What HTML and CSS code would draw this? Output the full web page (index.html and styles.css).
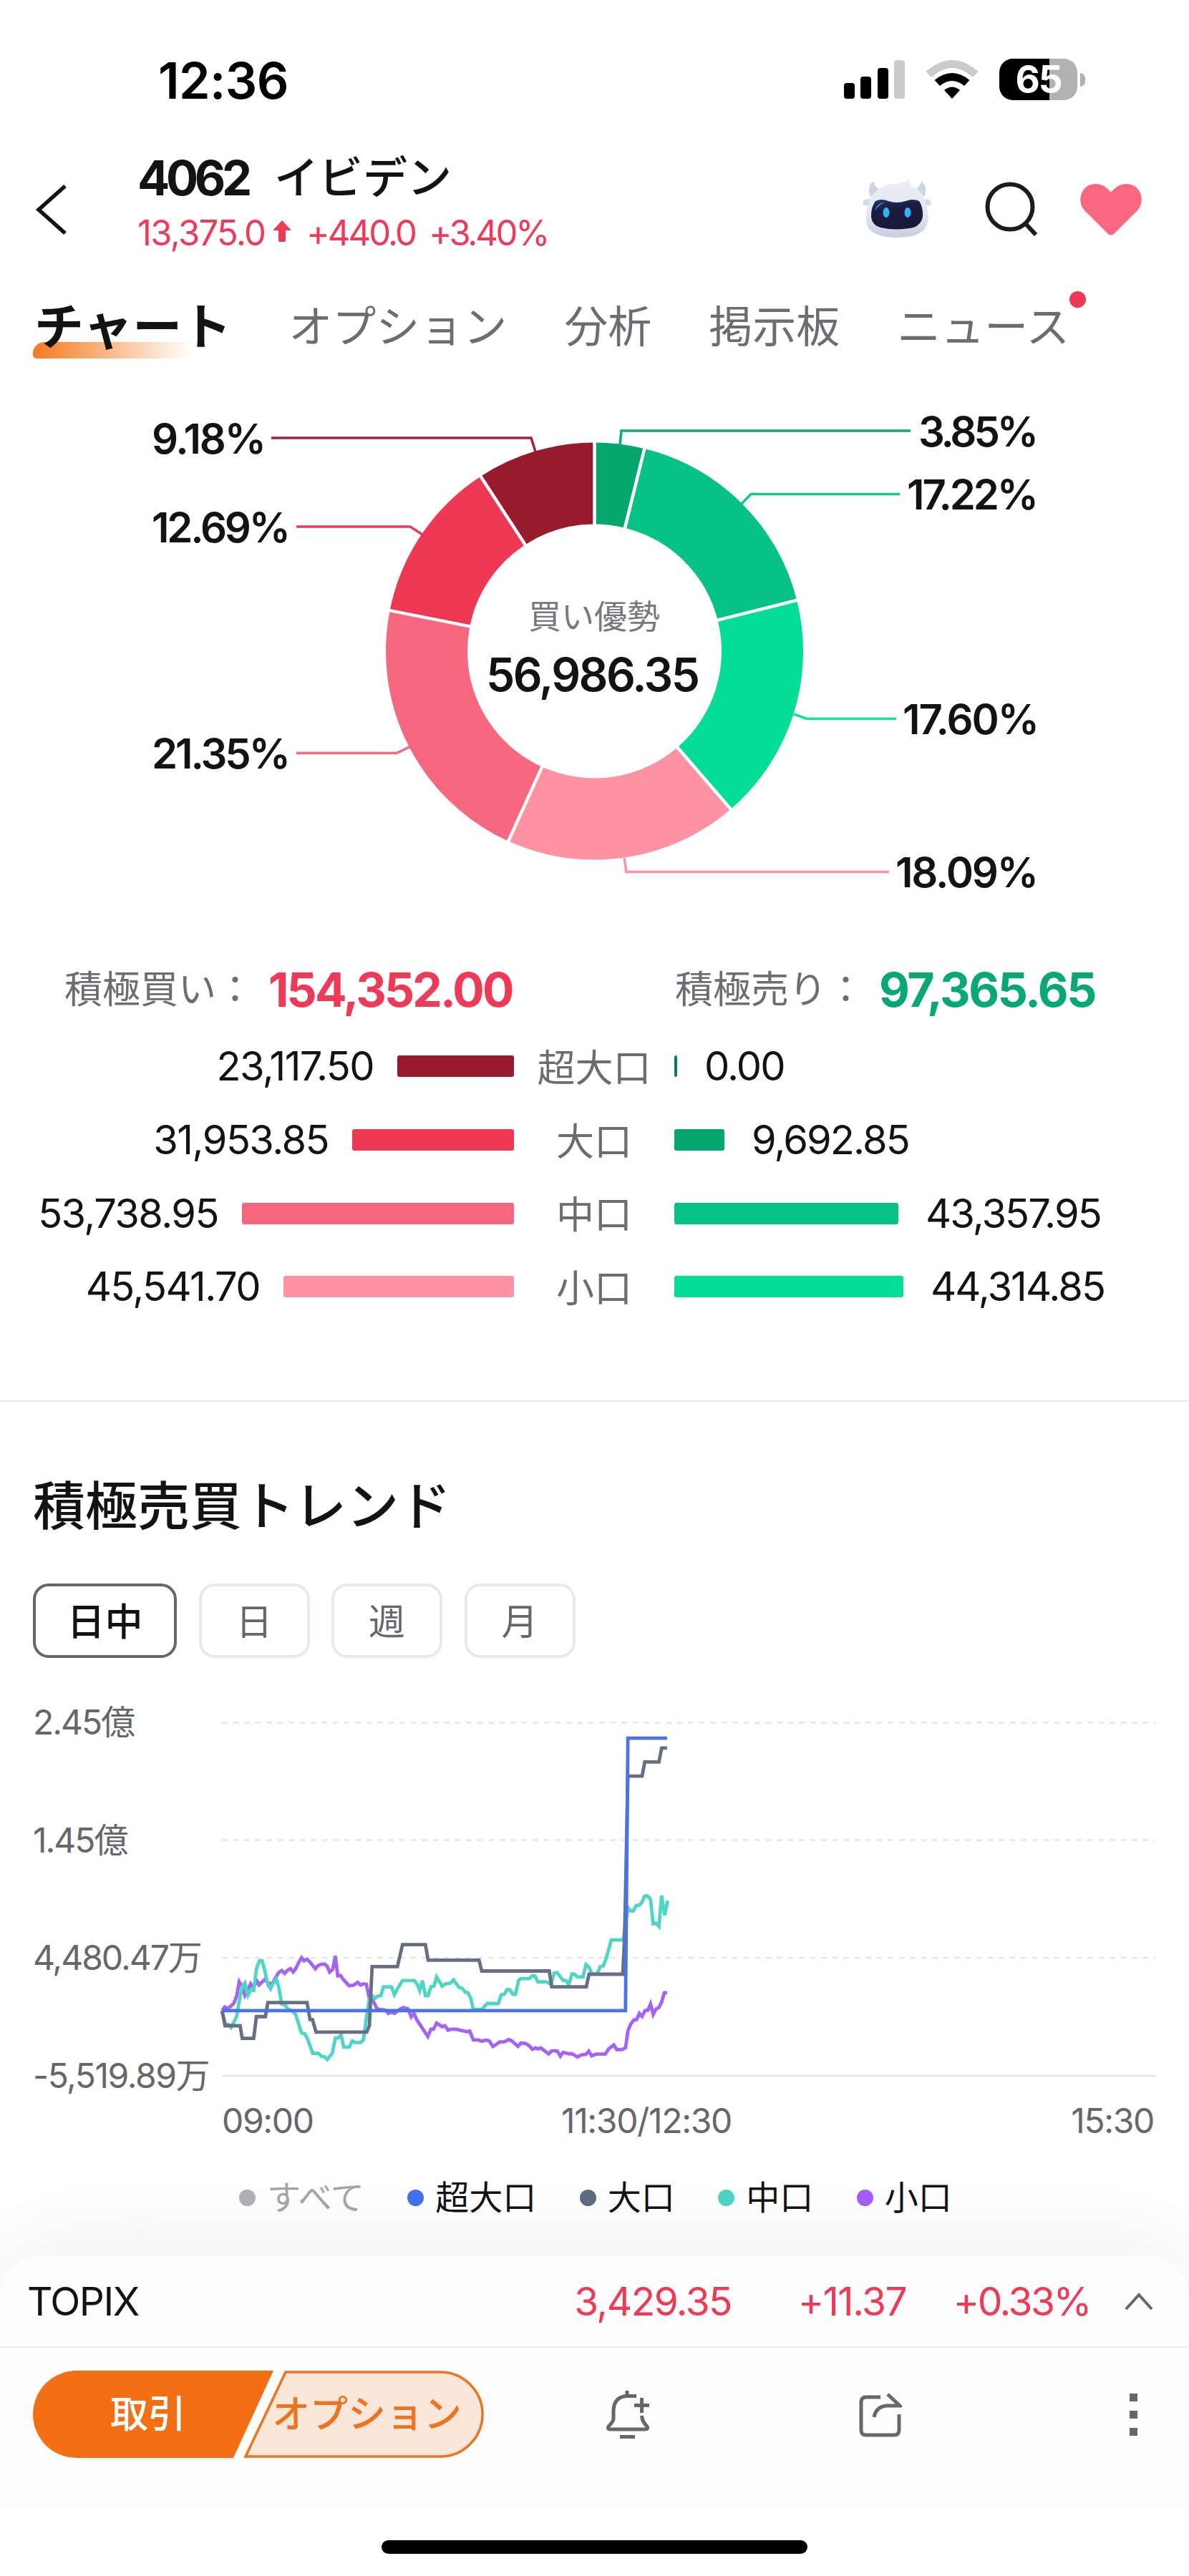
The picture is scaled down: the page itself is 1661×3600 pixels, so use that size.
FILE: index.html
```html
<!DOCTYPE html>
<html lang="ja">

<head>
  <meta charset="UTF-8">
  <meta name="viewport" content="width=device-width, initial-scale=1.0">
  <title>4062 イビデン</title>
  <link rel="stylesheet" href="styles.css">
</head>

<body>
  <!-- ステータスバー -->
  <div class="status-bar">
    <span class="time num">12:36</span>
    <div class="status-icons">
      <svg width="86" height="56" viewBox="0 0 86 56">
        <rect x="0" y="33" width="15" height="22" rx="4" />
        <rect x="23" y="24" width="15" height="31" rx="4" />
        <rect x="47" y="12" width="15" height="43" rx="4" />
        <rect x="70" y="1" width="15" height="54" rx="4" fill="#cbcbcb" />
      </svg>
      <svg class="wifi" width="74" height="56" viewBox="0 0 74 56">
        <path d="M0.500 17Q37 -15 73.500 17L66 25Q37 -1 8 25Z" fill="#cbcbcb" />
        <path d="M12.500 29Q37 9 61.500 29L54 37Q37 23 20 37Z" />
        <path d="M26 43Q37 34 48 43L37 55Z" />
      </svg>
      <div class="battery"><span class="num">65</span></div>
      <div class="battery-tip"></div>
    </div>
  </div>

  <!-- ヘッダー -->
  <header class="header">
    <svg class="back" width="48" height="76" viewBox="0 0 48 76">
      <path d="M43 5L6 38L43 71" fill="none" stroke="#131315" stroke-width="5.500" />
    </svg>
    <div class="stock">
      <div class="stock-name"><span class="code num">4062</span><span class="name">イビデン</span></div>
      <div class="stock-price num">
        <span class="price">13,375.0</span>
        <svg width="26" height="30" viewBox="0 0 26 30">
          <path d="M13 0L26 14H18V28Q18 30 16 30H10Q8 30 8 28V14H0Z" fill="#ee3a57" />
        </svg>
        <span class="diff">+440.0</span>
        <span class="rate">+3.40%</span>
      </div>
    </div>
    <div class="header-icons">
      <svg width="100" height="90" viewBox="0 0 100 90">
        <defs>
          <linearGradient id="face" x1="0" y1="0" x2="0" y2="1">
            <stop offset="0" stop-color="#eceef3" />
            <stop offset=".6" stop-color="#e4e7f0" />
            <stop offset="1" stop-color="#c5cee0" />
          </linearGradient>
          <linearGradient id="visor" x1="0" y1="0" x2=".3" y2="1">
            <stop offset="0" stop-color="#1f3568" />
            <stop offset=".4" stop-color="#1a1d40" />
            <stop offset="1" stop-color="#1c1836" />
          </linearGradient>
        </defs>
        <path d="M17 5Q7 14 13 27L27 18Q18 13 17 5ZM84 5Q94 14 88 27L74 18Q83 13 84 5Z" fill="#ccd4e6" />
        <path d="M5 31Q0 35 4 39L14 40V30ZM95 31Q100 35 96 39L86 40V30Z" fill="#d3daea" />
        <path d="M13 30Q20 14 42 9Q58 9 68 2Q67 8 70 12Q84 17 88 30Q98 54 91 69Q82 84 50 84Q18 84 9 69Q3 51 13 30Z" fill="url(#face)" />
        <path d="M20 33Q28 29 38 33Q50 37 62 33Q72 29 81 33Q87 42 86 55Q84 66 73 70Q50 75 27 70Q14 66 14 53Q14 41 20 33Z" fill="url(#visor)" />
        <path d="M19 47Q21 36 34 34Q25 38 19 47Z" fill="#4f7fc9" />
        <ellipse cx="35" cy="49" rx="4.500" ry="7" fill="#2eb4f1" />
        <ellipse cx="65" cy="49" rx="4.500" ry="7" fill="#2eb4f1" />
      </svg>
      <svg class="search" width="80" height="80" viewBox="0 0 80 80">
        <circle cx="38" cy="38" r="31.500" fill="none" stroke="#1c1c1e" stroke-width="6" />
        <path d="M60 62L74 77" stroke="#1c1c1e" stroke-width="6" />
      </svg>
      <svg class="heart" width="86" height="72" viewBox="0 0 86 72">
        <path d="M43 12Q34 0 22 0Q10 0 4 9Q-3 21 3 33Q6 38 12 43L39 70Q43 73 47 70L74 43Q80 38 83 33Q89 21 82 9Q76 0 64 0Q52 0 43 12Z" fill="#fa687f" />
      </svg>
    </div>
  </header>

  <!-- タブ -->
  <nav class="tabs">
    <a class="tab active">チャート</a>
    <a class="tab">オプション</a>
    <a class="tab">分析</a>
    <a class="tab">掲示板</a>
    <a class="tab new">ニュース</a>
  </nav>

  <!-- 売買比率の円グラフ -->
  <svg class="donut" width="1661" height="780" viewBox="0 0 1661 780">
    <g transform="translate(830.500 370)">
      <g class="slices" transform="rotate(-90)">
        <circle r="234.500" pathLength="99.980" stroke="#03a76e" stroke-dasharray="3.850 100" />
        <circle r="234.500" pathLength="99.980" stroke="#06c284" stroke-dasharray="17.220 100" stroke-dashoffset="-3.850" />
        <circle r="234.500" pathLength="99.980" stroke="#04dd95" stroke-dasharray="17.600 100" stroke-dashoffset="-21.070" />
        <circle r="234.500" pathLength="99.980" stroke="#fe92a2" stroke-dasharray="18.090 100" stroke-dashoffset="-38.670" />
        <circle r="234.500" pathLength="99.980" stroke="#f7687e" stroke-dasharray="21.350 100" stroke-dashoffset="-56.760" />
        <circle r="234.500" pathLength="99.980" stroke="#ee3854" stroke-dasharray="12.690 100" stroke-dashoffset="-78.110" />
        <circle r="234.500" pathLength="99.980" stroke="#981b2d" stroke-dasharray="9.180 100" stroke-dashoffset="-90.800" />
      </g>
      <g class="gaps">
        <path d="M0 -176V-293" />
        <path d="M0 -176V-293" transform="rotate(13.860)" />
        <path d="M0 -176V-293" transform="rotate(75.870)" />
        <path d="M0 -176V-293" transform="rotate(139.240)" />
        <path d="M0 -176V-293" transform="rotate(204.380)" />
        <path d="M0 -176V-293" transform="rotate(281.250)" />
        <path d="M0 -176V-293" transform="rotate(326.950)" />
      </g>
    </g>
    <g class="leaders">
      <path d="M379 72H742L748 91" stroke="#a02338" />
      <path d="M414 196H573L590 207" stroke="#ee3a57" />
      <path d="M414 512.500H554L572 504" stroke="#f7687e" />
      <path d="M866 82L868 62H1272" stroke="#12a972" />
      <path d="M1036 164L1049 150.500H1257" stroke="#18c78d" />
      <path d="M1109 458L1127 464.500H1252" stroke="#1cdd9b" />
      <path d="M872 659L875 678.500H1242" stroke="#fe92a2" />
    </g>
    <g class="percents">
      <text x="212" y="94" textLength="160">9.18%</text>
      <text x="212" y="218" textLength="194">12.69%</text>
      <text x="212" y="534" textLength="194">21.35%</text>
      <text x="1283" y="84" textLength="168">3.85%</text>
      <text x="1267" y="172" textLength="184">17.22%</text>
      <text x="1261" y="486" textLength="191">17.60%</text>
      <text x="1251" y="700" textLength="200">18.09%</text>
    </g>
    <text class="donut-label" x="830" y="338" text-anchor="middle">買い優勢</text>
    <text class="donut-value" x="679" y="426" textLength="299">56,986.35</text>
  </svg>

  <!-- 積極買い・積極売り -->
  <div class="totals">
    <div class="total buy"><span>積極買い：</span><b class="num">154,352.00</b></div>
    <div class="total sell"><span>積極売り：</span><b class="num">97,365.65</b></div>
  </div>
  <div class="orders">
    <div class="order-row">
      <div class="side left"><span class="num">23,117.50</span><i class="bar b1" style="width: 163px"></i></div>
      <div class="size">超大口</div>
      <div class="side right"><i class="bar s1" style="width: 4px"></i><span class="num">0.00</span></div>
    </div>
    <div class="order-row">
      <div class="side left"><span class="num">31,953.85</span><i class="bar b2" style="width: 226px"></i></div>
      <div class="size">大口</div>
      <div class="side right"><i class="bar s2" style="width: 70px"></i><span class="num">9,692.85</span></div>
    </div>
    <div class="order-row">
      <div class="side left"><span class="num">53,738.95</span><i class="bar b3" style="width: 380px"></i></div>
      <div class="size">中口</div>
      <div class="side right"><i class="bar s3" style="width: 313px"></i><span class="num">43,357.95</span></div>
    </div>
    <div class="order-row">
      <div class="side left"><span class="num">45,541.70</span><i class="bar b4" style="width: 322px"></i></div>
      <div class="size">小口</div>
      <div class="side right"><i class="bar s4" style="width: 320px"></i><span class="num">44,314.85</span></div>
    </div>
  </div>

  <!-- トレンド -->
  <section class="trend">
    <h2>積極売買トレンド</h2>
    <div class="periods">
      <button class="period selected">日中</button>
      <button class="period">日</button>
      <button class="period">週</button>
      <button class="period">月</button>
    </div>
    <div class="chart">
      <div class="y-axis num">
        <span>2.45億</span>
        <span>1.45億</span>
        <span>4,480.47万</span>
        <span class="min">-5,519.89万</span>
      </div>
      <svg class="plot" width="1304" height="494" viewBox="0 0 1304 494">
        <path class="grid" d="M0 0.500H1304M0 164.500H1304M0 329H1304" />
        <path class="base" d="M0 494H1304" />
        <g class="series" transform="translate(-20 -26.500) scale(.4209 .3444)">
          <polyline stroke="#a463f7" points="48,1245 57,1232 66,1238 78,1228 88,1215 97,1185 105,1130 115,1150 124,1185 133,1165 143,1138 152,1155 163,1125 171,1142 190,1120 200,1135 215,1138 225,1115 236,1092 246,1084 256,1096 264,1084 275,1076 284,1090 293,1076 303,1050 312,1032 320,1045 330,1038 340,1050 358,1077 366,1065 378,1058 388,1058 396,1065 405,1090 415,1080 424,1025 432,1106 441,1104 450,1120 470,1146 485,1143 498,1132 508,1143 518,1138 527,1140 537,1198 548,1205 563,1240 590,1245 600,1258 610,1252 620,1258 640,1240 650,1234 665,1240 676,1272 685,1258 695,1285 731,1352 741,1322 750,1322 760,1297 778,1312 788,1308 798,1326 810,1322 825,1322 860,1332 870,1330 882,1366 900,1366 910,1371 925,1366 935,1370 947,1392 970,1374 985,1373 1000,1364 1010,1370 1030,1392 1040,1378 1055,1380 1068,1390 1078,1404 1088,1398 1097,1402 1106,1398 1132,1422 1142,1410 1160,1410 1171,1432 1180,1416 1200,1422 1210,1422 1228,1435 1238,1427 1256,1424 1265,1411 1275,1430 1290,1423 1320,1423 1331,1402 1348,1386 1358,1405 1375,1405 1387,1398 1395,1330 1404,1302 1415,1284 1424,1283 1433,1258 1442,1270 1452,1246 1461,1246 1470,1220 1479,1262 1488,1240 1497,1235 1506,1215 1516,1174 1525,1174" />
          <polyline stroke="#4fd5c4" points="48,1247 58,1300 68,1302 78,1315 88,1292 97,1268 106,1200 115,1150 124,1135 134,1185 144,1162 153,1165 162,1078 172,1044 181,1044 190,1085 200,1142 209,1158 218,1135 228,1118 237,1155 246,1220 256,1222 266,1240 284,1250 293,1265 312,1338 322,1340 332,1362 349,1420 368,1420 378,1432 388,1434 397,1445 414,1420 424,1358 434,1357 443,1346 452,1395 470,1395 480,1370 490,1376 508,1376 517,1366 528,1270 537,1200 545,1185 555,1197 565,1188 575,1186 584,1150 610,1150 620,1182 630,1158 647,1125 686,1125 695,1138 704,1165 713,1125 723,1186 732,1186 741,1150 751,1148 760,1110 779,1148 790,1138 805,1136 816,1122 835,1153 845,1156 855,1172 864,1174 873,1195 882,1242 910,1242 928,1218 965,1218 975,1182 985,1180 994,1162 1003,1162 1013,1180 1022,1180 1032,1125 1040,1117 1068,1117 1078,1105 1087,1106 1096,1130 1124,1130 1140,1140 1150,1095 1160,1092 1180,1124 1190,1125 1199,1142 1209,1098 1217,1098 1228,1110 1246,1110 1256,1060 1266,1070 1276,1098 1293,1098 1303,1068 1313,1066 1323,1035 1340,960 1380,960 1388,880 1396,830 1404,842 1413,842 1423,820 1432,820 1441,808 1451,782 1460,781 1470,795 1479,895 1488,892 1498,905 1507,780 1517,860 1527,800" />
          <polyline stroke="#667085" points="48,1247 58,1308 108,1308 115,1359 153,1359 162,1271 192,1271 200,1214 330,1214 340,1283 348,1283 360,1334 528,1334 537,1308 546,1068 630,1068 647,979 723,979 732,1042 901,1042 910,1086 1134,1086 1142,1150 1257,1150 1266,1099 1378,1099 1384,950 1395,295 1442,295 1451,238 1498,238 1507,181 1525,181" />
          <polyline stroke="#4a72ea" points="48,1247 1387,1247 1395,141 1525,141" />
        </g>
      </svg>
    </div>
    <div class="x-axis num">
      <span>09:00</span>
      <span>11:30/12:30</span>
      <span>15:30</span>
    </div>
    <div class="legend">
      <span class="item off"><i class="dot all"></i>すべて</span>
      <span class="item"><i class="dot xl"></i>超大口</span>
      <span class="item"><i class="dot lg"></i>大口</span>
      <span class="item"><i class="dot md"></i>中口</span>
      <span class="item"><i class="dot sm"></i>小口</span>
    </div>
  </section>

  <!-- 下部バー -->
  <footer class="sheet">
    <div class="index-row num">
      <span class="index-name">TOPIX</span>
      <span class="index-value">3,429.35</span>
      <span class="index-diff">+11.37</span>
      <span class="index-rate">+0.33%</span>
      <svg width="40" height="26" viewBox="0 0 40 26">
        <path d="M2 24L20 4L38 24" fill="none" stroke="#66676b" stroke-width="4" />
      </svg>
    </div>
    <div class="actions">
      <div class="trade">
        <svg class="trade-shape" width="632" height="122" viewBox="0 0 632 122">
          <path d="M61 0H336L280 122H61A61 61 0 0 1 61 0Z" fill="#f26f13" />
          <path d="M353 2H569A59 59 0 0 1 569 120H297Z" fill="#fae7da" stroke="#ec7421" stroke-width="3.500" />
        </svg>
        <span class="trade-main">取引</span>
        <span class="trade-option">オプション</span>
      </div>
      <svg class="bell" width="62" height="68" viewBox="0 0 62 68" fill="none" stroke="#66676b" stroke-width="5">
        <path d="M30 0V8M43 7.500H29Q12 9 11 27V40Q10 44 4 50Q2 54 6 54H55Q60 54 58 50Q51 43 50.500 35M40 20.500H61M50.500 10V31M20 64.500H41" />
      </svg>
      <svg class="share" width="60" height="64" viewBox="0 0 60 64" fill="none" stroke="#66676b" stroke-width="5">
        <path d="M30 6H10Q3 6 3 13V52Q3 59 10 59H49Q56 59 56 52V30M21 34Q24 19 39 18H57L40 2" />
      </svg>
      <svg class="more" width="11" height="60" viewBox="0 0 11 60" fill="#66676b">
        <path d="M0 0H11V11H0ZM0 24H11V35H0ZM0 48H11V59H0Z" />
      </svg>
    </div>
    <div class="home-indicator"></div>
  </footer>
</body>

</html>
```
FILE: styles.css
```css
* {
  box-sizing: border-box;
}

body {
  margin: 0;
  width: 1661px;
  height: 3600px;
  overflow: hidden;
  background: #fff;
  color: #131315;
  font-family: Inter, "Noto Sans CJK JP", sans-serif;
  display: flex;
  flex-direction: column;
}

.num {
  font-family: Inter, "Noto Sans CJK JP", sans-serif;
  letter-spacing: -0.028em;
  white-space: nowrap;
}

svg {
  display: block;
  flex: none;
}

/* status bar */
.status-bar {
  height: 180px;
  padding: 46px 145px 0 221px;
  display: flex;
  justify-content: space-between;
  align-items: flex-start;
  color: #000;
}

.time {
  font-size: 70px;
  line-height: 134px;
  font-weight: 600;
  letter-spacing: -0.008em;
}

.status-icons {
  display: flex;
  align-items: center;
  height: 130px;
}

.wifi {
  margin: 0 29px 0 28px;
}

.battery {
  width: 109px;
  height: 58px;
  border-radius: 19px;
  background: linear-gradient(90deg, #000 64%, #b2b2b2 64%);
  color: #fff;
  font-size: 53px;
  font-weight: 700;
  line-height: 58px;
  text-align: center;
}

.battery .num {
  letter-spacing: -0.04em;
}

.battery-tip {
  width: 7px;
  height: 19px;
  margin-left: 4px;
  border-radius: 0 7px 7px 0;
  background: #b2b2b2;
}

/* header */
.header {
  height: 190px;
  padding: 0 66px 0 48px;
  display: flex;
  align-items: flex-start;
}

.back {
  margin-top: 75px;
}

.stock {
  margin-left: 96px;
  padding-top: 24px;
}

.stock-name {
  height: 88px;
  line-height: 90px;
  display: flex;
}

.code {
  font-size: 67px;
  font-weight: 700;
  width: 191px;
  letter-spacing: -0.08em;
}

.name {
  font-size: 62px;
  font-weight: 500;
}

.stock-price {
  display: flex;
  align-items: center;
  height: 66px;
  font-size: 49px;
  color: #ee3a57;
}

.price {
  letter-spacing: -0.034em;
}

.stock-price svg {
  margin: 0 21px 4px 11px;
}

.diff {
  margin-right: 19px;
  letter-spacing: -0.06em;
}

.rate {
  letter-spacing: -0.067em;
}

.header-icons {
  margin-left: auto;
  padding-top: 68px;
  display: flex;
}

.search {
  margin: 3px 56px 0 70px;
}

.heart {
  margin-top: 9px;
}

/* tabs */
.tabs {
  height: 170px;
  padding: 35px 48px 0;
  display: flex;
  align-items: flex-start;
  gap: 80px;
  font-size: 61px;
  line-height: 104px;
  color: #6c6d71;
}

.tab {
  position: relative;
  white-space: nowrap;
}

.tab.active {
  font-size: 69px;
  font-weight: 700;
  color: #131315;
  z-index: 0;
}

.tab.active::before {
  content: "";
  position: absolute;
  z-index: -1;
  left: -2px;
  top: 73px;
  width: 222px;
  height: 23px;
  border-radius: 16px 0 0 5px;
  background: linear-gradient(90deg, #f47a1f, rgba(244, 122, 31, 0));
}

.tab.new::after {
  content: "";
  position: absolute;
  right: -23px;
  top: 2px;
  width: 23px;
  height: 23px;
  border-radius: 50%;
  background: #ee3854;
}

/* donut */
.slices circle {
  fill: none;
  stroke-width: 114;
}

.gaps path {
  stroke: #fff;
  stroke-width: 4.5;
}

.leaders path {
  fill: none;
  stroke-width: 3.5;
}

.percents text {
  font-size: 58px;
  font-weight: 600;
  fill: #131315;
}

.donut-label {
  font-size: 46px;
  fill: #77787c;
}

.donut-value {
  font-size: 64px;
  font-weight: 600;
  fill: #131315;
}

/* totals */
.totals {
  height: 119px;
  display: grid;
  grid-template-columns: 853px 1fr;
  line-height: 126px;
  padding-left: 90px;
}

.total {
  display: flex;
  white-space: nowrap;
}

.total span {
  font-size: 53px;
  width: 285px;
  color: #6c6d71;
}

.total b {
  font-size: 66px;
  font-weight: 700;
  letter-spacing: -0.043em;
}

.total.buy b {
  color: #ee3a57;
}

.total.sell b {
  color: #08a970;
  letter-spacing: -0.036em;
}

.orders {
  height: 518px;
}

.order-row {
  height: 102.7px;
  display: grid;
  grid-template-columns: 718px 224px 1fr;
  align-items: center;
  font-size: 56px;
}

.side {
  display: flex;
  align-items: center;
}

.side.left {
  justify-content: flex-end;
  gap: 33px;
}

.side.right {
  gap: 38px;
}

.side.right .num {
  letter-spacing: -0.034em;
}

.size {
  font-size: 53px;
  padding-bottom: 3px;
  text-align: center;
  color: #6c6d71;
}

.bar {
  height: 30px;
  border-radius: 3px;
}

.b1 { background: #981b2d; }
.b2 { background: #ee3854; }
.b3 { background: #f7687e; }
.b4 { background: #fe92a2; }
.s1 { background: #0a7f58; }
.s2 { background: #03a76e; }
.s3 { background: #06c284; }
.s4 { background: #04dd95; }

/* trend */
.trend {
  height: 1195px;
  border-top: 2px solid #e8e8ea;
  padding: 94px 46px 0;
}

.trend h2 {
  margin: 0;
  font-size: 73px;
  font-weight: 500;
  line-height: 104px;
}

.periods {
  display: flex;
  gap: 30.5px;
  margin-top: 56px;
}

.period {
  width: 155px;
  height: 104px;
  padding: 0 0 4px;
  border: 4px solid #e9e9ec;
  border-radius: 22px;
  background: #fff;
  font: 51px Inter, "Noto Sans CJK JP", sans-serif;
  color: #66676b;
}

.period.selected {
  width: 201px;
  border-color: #66676b;
  color: #131315;
  font-size: 53px;
  font-weight: 500;
}

.chart {
  margin-top: 60px;
  display: flex;
}

.y-axis {
  width: 264px;
  height: 554px;
  display: flex;
  flex-direction: column;
  justify-content: space-between;
  font-size: 48px;
  line-height: 60px;
  letter-spacing: -0.042em;
  color: #66676b;
}

.min {
  letter-spacing: -0.03em;
}

.plot {
  margin-top: 30px;
  overflow: visible;
}

.grid {
  stroke: #e6e6e8;
  stroke-width: 2.5;
  stroke-dasharray: 8 7.5;
}

.base {
  stroke: #e6e6e8;
  stroke-width: 2.5;
}

.series polyline {
  fill: none;
  stroke-width: 4.8;
  vector-effect: non-scaling-stroke;
}

.x-axis {
  margin: 3px 3px 0 264px;
  display: grid;
  grid-template-columns: 474px 1fr auto;
  font-size: 48px;
  line-height: 60px;
  color: #66676b;
}

.legend {
  margin: 41px 0 0 288px;
  display: flex;
  gap: 60.5px;
  font-size: 47px;
  line-height: 72px;
}

.item {
  display: flex;
  align-items: center;
  gap: 16px;
}

.item.off {
  color: #a5a6aa;
}

.dot {
  width: 23px;
  height: 23px;
  border-radius: 50%;
}

.all { background: #b0b0b5; }
.xl { background: #4371f0; }
.lg { background: #5f6b82; }
.md { background: #4fd5c4; }
.sm { background: #a55ffa; }

/* bottom sheet */
.sheet {
  height: 448px;
  border-radius: 60px 60px 0 0;
  background: linear-gradient(#fdfdfd 60%, #fff);
  box-shadow: 0 0 150px rgba(0, 0, 0, .08);
}

.index-row {
  height: 129px;
  padding: 0 50px 0 38px;
  border-bottom: 2px solid #ececee;
  display: flex;
  align-items: center;
  font-size: 55px;
  color: #ee3a57;
}

.index-name {
  flex: 1;
  color: #131315;
}

.index-diff {
  width: 244px;
  text-align: right;
}

.index-rate {
  width: 257px;
  text-align: right;
  margin-right: 48px;
  letter-spacing: -0.045em;
}

.actions {
  height: 269px;
  padding: 32px 72px 0 46px;
  display: flex;
  align-items: flex-start;
}

.trade {
  position: relative;
  width: 632px;
  height: 122px;
  display: flex;
  line-height: 122px;
  font-size: 53px;
  font-weight: 500;
}

.trade-shape {
  position: absolute;
}

.trade span {
  position: relative;
}

.trade-main {
  width: 334px;
  padding-left: 108px;
  color: #fff;
}

.trade-option {
  color: #ec7421;
}

.bell {
  margin: 28px 0 0 168px;
}

.share {
  margin: 31px 0 0 292px;
}

.more {
  margin: 32px 0 0 auto;
}

.home-indicator {
  width: 595px;
  height: 19px;
  margin: 0 auto;
  border-radius: 10px;
  background: #000;
}
```
